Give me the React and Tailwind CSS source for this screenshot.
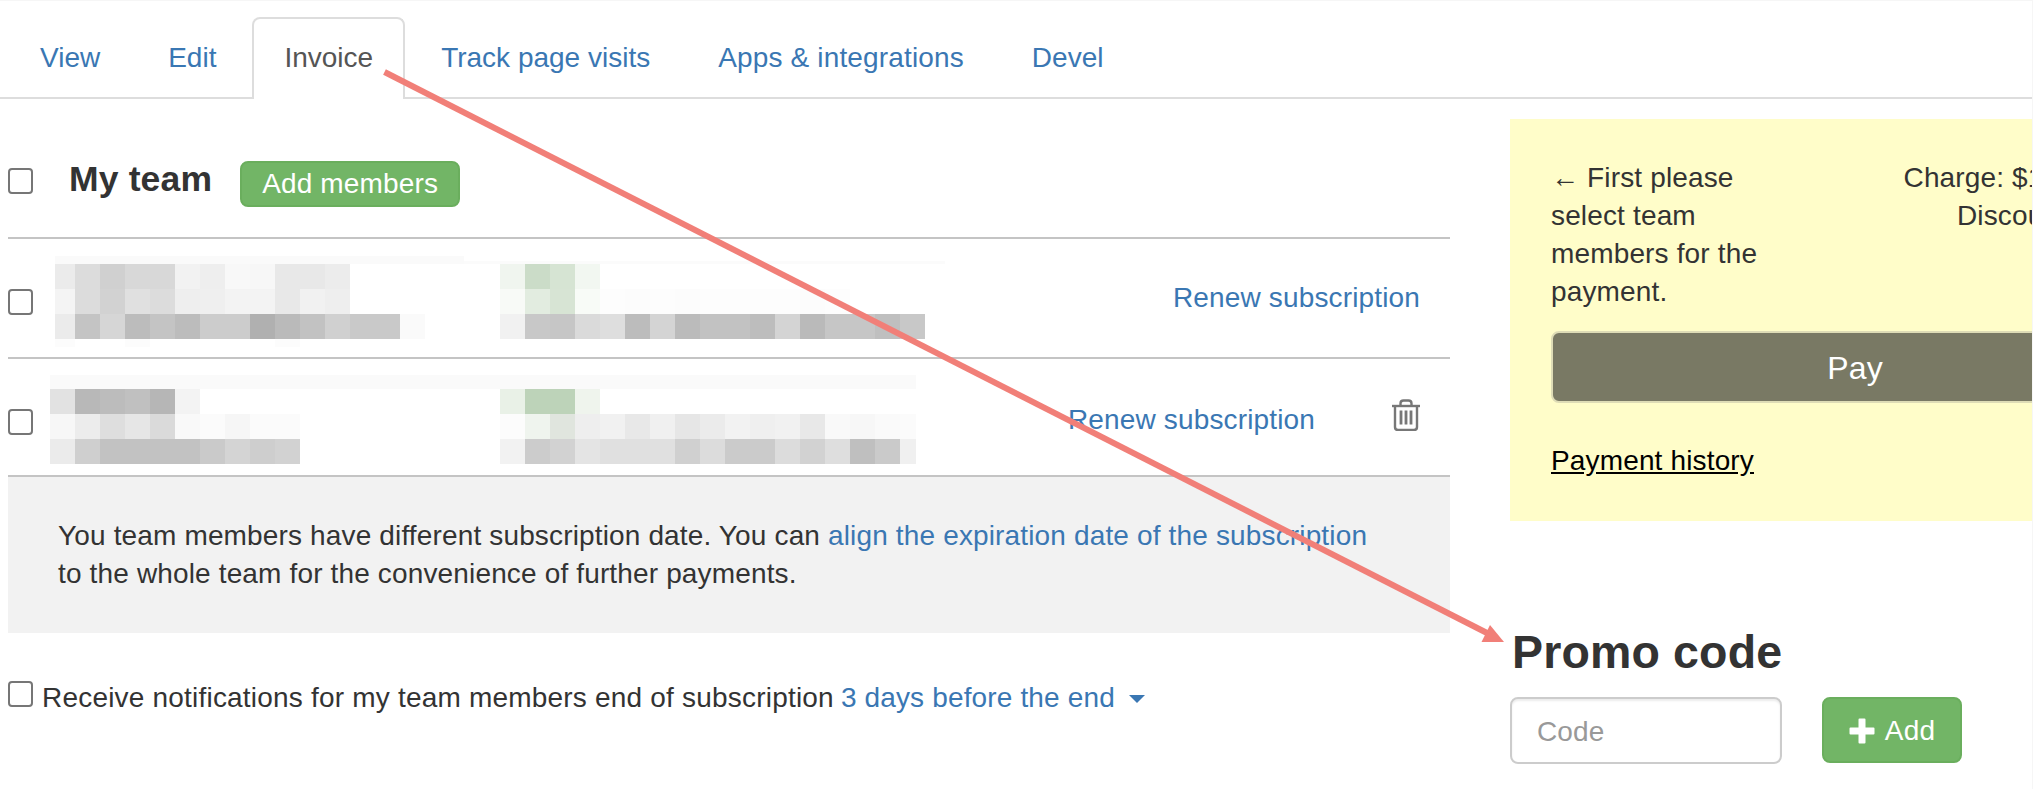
import React from 'react';

const firstRowLeft = [
  ['#ebebeb', '#dcdcdc', '#d0d0d0', '#d8d8d8', '#d8d8d8', '#f2f2f2', '#eeeeee', '#f8f8f8', '#f7f7f7', '#e8e8e8', '#e8e8e8', '#ececec'],
  ['#f4f4f4', '#dcdcdc', '#d2d2d2', '#e0e0e0', '#dcdcdc', '#eeeeee', '#efefef', '#f3f3f3', '#f3f3f3', '#e8e8e8', '#f1f1f1', '#eeeeee'],
  ['#ebebeb', '#c4c4c4', '#d6d6d6', '#bcbcbc', '#c4c4c4', '#bcbcbc', '#cccccc', '#cccccc', '#b0b0b0', '#bababa', '#c2c2c2', '#d0d0d0', '#c9c9c9', '#c9c9c9', '#fafafa'],
];

const firstRowRight = [
  ['#f0f5ef', '#cbdcc8', '#d6e4d3', '#f2f7f1'],
  ['#f8faf7', '#e2ece0', '#d7e4d4', '#f8fbf7', '#fdfdfd', '#fcfcfc', '#fdfdfd', '#fcfcfc', '#fdfdfd', '#fdfdfd', '#fdfdfd', '#fdfdfd', '#fcfcfc', '#fdfdfd'],
  ['#f1f1f1', '#c8c8c8', '#c6c6c6', '#dadada', '#dedede', '#bcbcbc', '#d4d4d4', '#bbbbbb', '#c2c2c2', '#c2c2c2', '#bdbdbd', '#d4d4d4', '#bababa', '#c6c6c6', '#c6c6c6', '#bfbfbf', '#c8c8c8'],
];

const secondRowLeft = [
  ['#e2e2e2', '#b8b8b8', '#bcbcbc', '#c0c0c0', '#b6b6b6', '#f3f3f3'],
  ['#f7f7f7', '#ececec', '#dedede', '#e6e6e6', '#dadada', '#f9f9f9', '#fbfbfb', '#f6f6f6', '#fbfbfb', '#fbfbfb'],
  ['#ebebeb', '#cfcfcf', '#c2c2c2', '#c2c2c2', '#c2c2c2', '#c2c2c2', '#cacaca', '#d4d4d4', '#cecece', '#d2d2d2'],
];

const secondRowRight = [
  ['#e9f1e7', '#bdd3b9', '#bdd3b9', '#eff4ed'],
  ['#fcfcfc', '#eff4ee', '#e0e5de', '#eeeeee', '#f1f1f1', '#e8e8e8', '#f0f0f0', '#e6e6e6', '#ebebeb', '#f2f2f2', '#efefef', '#f1f1f1', '#e8e8e8', '#f9f9f9', '#f7f7f7', '#fafafa', '#fbfbfb'],
  ['#f2f2f2', '#cccccc', '#d2d2d2', '#e4e4e4', '#e0e0e0', '#e0e0e0', '#e0e0e0', '#d0d0d0', '#dcdcdc', '#cbcbcb', '#cbcbcb', '#dcdcdc', '#d2d2d2', '#dedede', '#bfbfbf', '#cacaca', '#f0f0f0'],
];

function Mosaic({ lines, width, narrowFirst, narrowLast }) {
  return (
    <div className={width}>
      {lines.map((line, i) => (
        <div key={i} className="flex h-[25px]">
          {line.map((color, j) => {
            let cell = 'w-[25px] flex-none';
            if (narrowFirst && j === 0) cell = 'w-[20px] flex-none';
            if (narrowLast && j === 16) cell = 'w-[16px] flex-none';
            return <div key={j} className={cell} style={{ backgroundColor: color }} />;
          })}
        </div>
      ))}
    </div>
  );
}

function Checkbox({ className }) {
  return <div className={`w-[25px] h-[26px] flex-none rounded-[4px] border-2 border-[#767676] bg-white ${className}`} />;
}

function Tab({ label, active, wide }) {
  if (active) {
    return (
      <div className="h-[82px] -mb-[2px] px-[30px] pt-[20px] mr-[4px] border-2 border-b-0 border-[#ddd] rounded-t-[8px] bg-white text-[#555] tracking-normal">
        {label}
      </div>
    );
  }
  return (
    <div className={`h-[80px] px-[32px] pt-[22px] mr-[4px] text-[#3a77b3] ${wide ? 'tracking-[0.15px]' : 'tracking-normal'}`}>
      {label}
    </div>
  );
}

function TrashIcon() {
  return (
    <svg width="30" height="32" viewBox="0 0 30 32" fill="none" stroke="#777" strokeWidth="2.4" className="flex-none">
      <path d="M1 7h28" />
      <path d="M9.500 7V4.500C9.500 2.500 11 1.500 12.500 1.500h5c1.500 0 3 1 3 3V7" />
      <path d="M4 7v21c0 1.800 1.200 3 3 3h16c1.800 0 3-1.200 3-3V7" />
      <path d="M10 11.500v14M15 11.500v14M20 11.500v14" strokeWidth="2.800" />
    </svg>
  );
}

export default function App() {
  return (
    <div className="relative box-border w-[2033px] h-[789px] overflow-hidden bg-white border-t border-r border-[#f6f6f6] font-['Liberation_Sans',Arial,sans-serif] text-[28px] leading-[38px] tracking-[0.15px] text-[#333]">
      <div className="flex h-[98px] pt-[16px] pl-[8px] border-b-2 border-[#ddd]">
        <Tab label="View" />
        <Tab label="Edit" />
        <Tab label="Invoice" active />
        <Tab label="Track page visits" />
        <Tab label="Apps & integrations" wide />
        <Tab label="Devel" />
      </div>

      <div className="flex">
        <div className="ml-[8px] w-[1442px] flex-none">
          <div className="flex items-center h-[140px] pt-[30px] border-b-2 border-[#c4c4c4]">
            <Checkbox className="-mt-[4px]" />
            <h3 className="ml-[36px] -mt-[8px] text-[35.5px] font-bold leading-[40px]">My team</h3>
            <button className="ml-[28px] mt-[2px] h-[46px] w-[220px] rounded-[8px] bg-[#72b566] border-2 border-[#6aae5d] text-white leading-[40px]">
              Add members
            </button>
          </div>

          <div className="flex h-[120px] border-b-2 border-[#c4c4c4]">
            <Checkbox className="mt-[50px]" />
            <div className="ml-[22px] mt-[17px] w-[890px] flex-none">
              <div className="flex items-end h-[8px]">
                <div className="h-[8px] w-[409px] bg-[#fafafa]" />
                <div className="h-[3px] w-[481px] bg-[#fbfbfb]" />
              </div>
              <div className="flex">
                <Mosaic lines={firstRowLeft} width="w-[445px] flex-none" narrowFirst />
                <Mosaic lines={firstRowRight} width="w-[425px] flex-none" />
              </div>
              <div className="flex h-[8px]">
                <div className="w-[20px] bg-[#fcfcfc]" />
                <div className="ml-[50px] w-[25px] bg-[#fcfcfc]" />
                <div className="ml-[125px] w-[25px] bg-[#fcfcfc]" />
              </div>
            </div>
            <a className="ml-auto mr-[30px] self-center text-[#3a77b3]">Renew subscription</a>
          </div>

          <div className="flex h-[118px] border-b-2 border-[#c4c4c4]">
            <Checkbox className="mt-[50px]" />
            <div className="ml-[17px] mt-[16px] w-[866px] flex-none">
              <div className="h-[14px] bg-[#fafafa]" />
              <div className="flex">
                <Mosaic lines={secondRowLeft} width="w-[450px] flex-none" />
                <Mosaic lines={secondRowRight} width="w-[416px] flex-none" narrowLast />
              </div>
            </div>
            <div className="ml-auto mr-[29px] flex items-center">
              <a className="mt-[6px] text-[#3a77b3]">Renew subscription</a>
              <div className="ml-[76px] -mt-[4px]">
                <TrashIcon />
              </div>
            </div>
          </div>

          <div className="h-[156px] pl-[50px] pr-[60px] pt-[40px] bg-[#f2f2f2]">
            You team members have different subscription date. You can{' '}
            <a className="text-[#3a77b3]">align the expiration date of the subscription</a> to the whole team for the
            convenience of further payments.
          </div>

          <div className="flex mt-[46px]">
            <Checkbox className="mt-[2px]" />
            <span className="ml-[9px] tracking-[0.2px]">Receive notifications for my team members end of subscription</span>
            <a className="ml-[7px] flex items-center text-[#3a77b3]">
              3 days before the end
              <span className="ml-[14px] mt-[2px] border-x-[8px] border-t-[8px] border-x-transparent border-t-[#3a77b3]" />
            </a>
          </div>
        </div>

        <div className="ml-[60px] w-[523px] flex-none overflow-hidden">
          <div className="h-[402px] mt-[20px] px-[41px] pt-[40px] bg-[#fffdc9] overflow-hidden">
            <div className="w-[608px]">
              <div className="flex justify-between">
                <div className="w-[240px]">← First please select team members for the payment.</div>
                <div className="w-[200px] mr-[84px] text-right">
                  <div className="whitespace-nowrap">Charge: $100</div>
                  <div className="whitespace-nowrap">Discount:</div>
                </div>
              </div>
              <button className="w-full h-[72px] mt-[20px] pt-[2px] rounded-[8px] bg-[#797964] border-2 border-[#dedcb6] text-white text-[32px]">
                Pay
              </button>
              <a className="block mt-[39px] text-black underline">Payment history</a>
            </div>
          </div>

          <h3 className="mt-[105px] ml-[2px] text-[46.5px] font-bold leading-[52px] whitespace-nowrap">Promo code</h3>
          <div className="flex mt-[19px]">
            <input
              placeholder="Code"
              className="box-border w-[272px] h-[67px] px-[25px] pt-[2px] rounded-[8px] border-2 border-[#ccc] bg-white shadow-[inset_0_2px_2px_rgba(0,0,0,0.075)] outline-none placeholder:text-[#999]"
            />
            <button className="flex items-center justify-center ml-[40px] w-[140px] h-[66px] pt-[2px] rounded-[8px] bg-[#72b566] border-2 border-[#6aae5d] text-white">
              <svg width="26" height="26" viewBox="0 0 26 26" fill="#fff" className="mr-[10px]">
                <path d="M9.500 1.500a1 1 0 0 1 1-1h5a1 1 0 0 1 1 1v8h8a1 1 0 0 1 1 1v5a1 1 0 0 1-1 1h-8v8a1 1 0 0 1-1 1h-5a1 1 0 0 1-1-1v-8h-8a1 1 0 0 1-1-1v-5a1 1 0 0 1 1-1h8z" />
              </svg>
              Add
            </button>
          </div>
        </div>
      </div>

      <svg width="2033" height="789" className="absolute left-0 top-[-1px] z-20 pointer-events-none">
        <line x1="384.500" y1="72" x2="1490" y2="634.500" stroke="#f17f78" strokeWidth="6" />
        <polygon points="1490,625 1481.500,642 1504,642" fill="#f17f78" />
      </svg>
    </div>
  );
}
